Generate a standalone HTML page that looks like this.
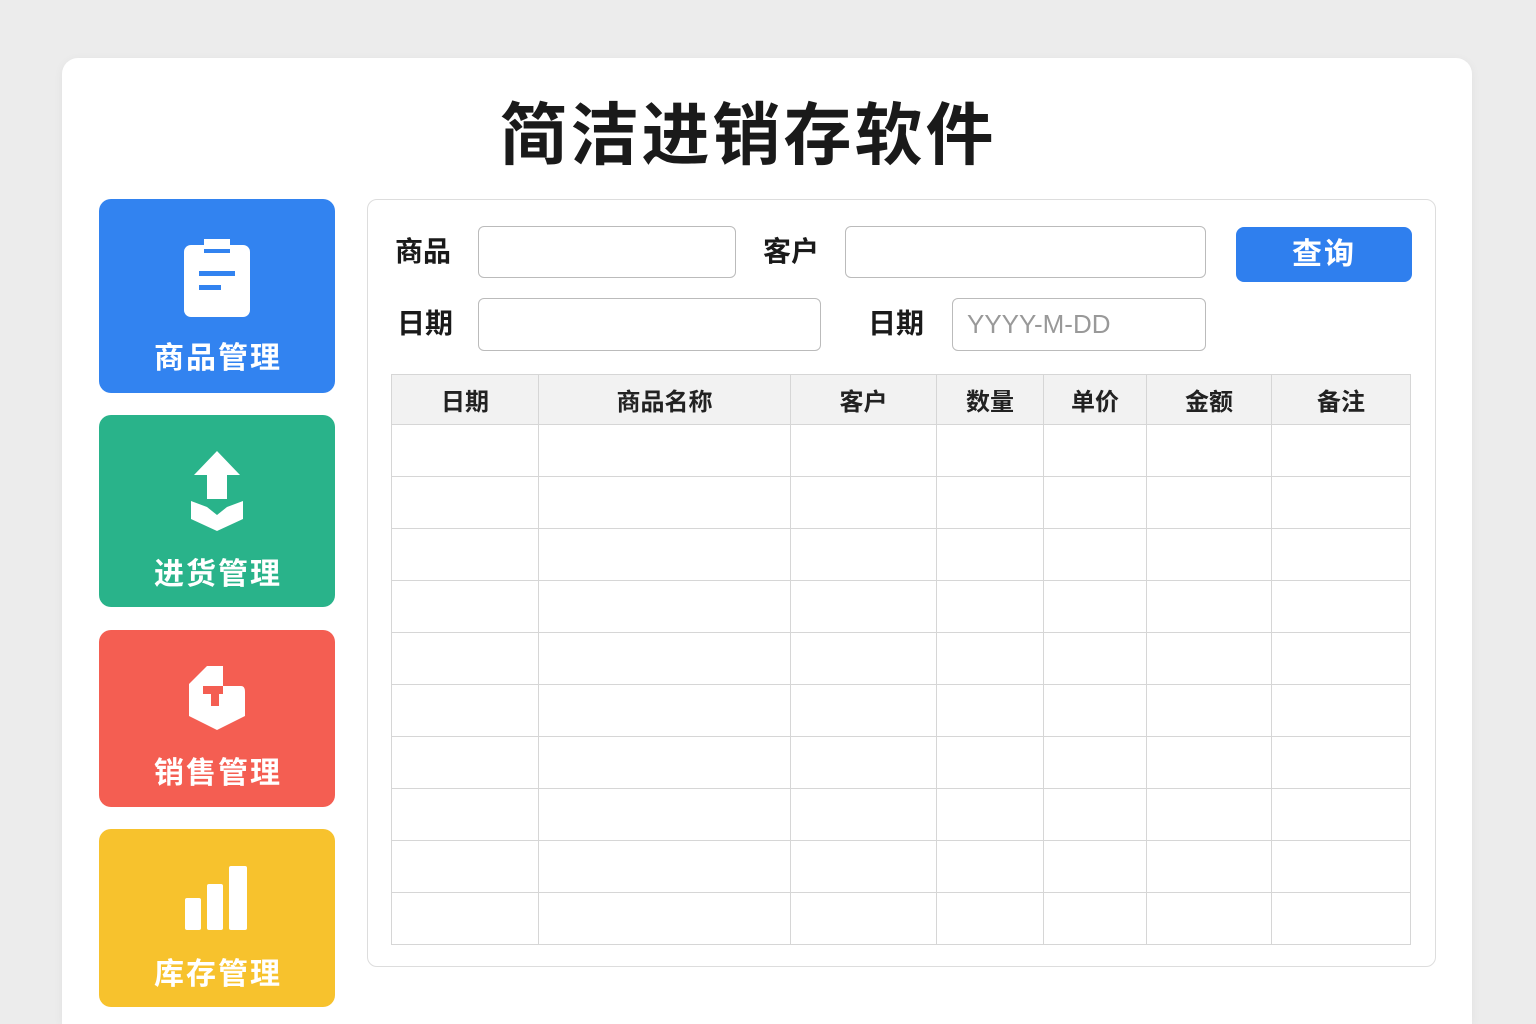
<!DOCTYPE html>
<html><head><meta charset="utf-8"><style>
*{margin:0;padding:0;box-sizing:border-box}
html,body{width:1536px;height:1024px;overflow:hidden}
body{background:#ececec;font-family:"Liberation Sans","Noto Sans CJK SC",sans-serif;position:relative}
.main{position:absolute;left:62px;top:58px;width:1410px;height:966px;background:#fff;border-radius:16px 16px 0 0;box-shadow:0 2px 10px rgba(0,0,0,.05)}
h1{position:absolute;left:0;width:1496px;top:94px;text-align:center;font-size:68px;font-weight:bold;color:#1a1a1a;letter-spacing:3px;line-height:84px}
.card{position:absolute;left:99px;width:236px;border-radius:12px;color:#fff;text-align:center}
.card .t{position:absolute;left:2px;right:0;font-size:30px;font-weight:bold;letter-spacing:2px}
.card svg{position:absolute;left:50%;transform:translateX(-50%)}
.panel{position:absolute;left:367px;top:199px;width:1069px;height:768px;border:1px solid #ddd;border-radius:10px}
.lbl{position:absolute;font-size:28px;font-weight:bold;color:#1a1a1a;line-height:32px}
.in{position:absolute;border:1px solid #bbb;border-radius:6px;background:#fff;font-size:26px;color:#999;padding-left:14px;line-height:50px}
.btn{position:absolute;left:1236px;top:227px;width:176px;height:55px;background:#2f7fee;border-radius:8px;color:#fff;font-size:30px;font-weight:bold;text-align:center;line-height:55px;letter-spacing:2px}
table{position:absolute;left:391px;top:374px;border-collapse:collapse}
td,th{border:1px solid #d6d6d6;height:52px}
th{background:#f2f2f2;font-size:24px;font-weight:bold;color:#222;height:50px}
</style></head><body>
<div class="main"></div>
<h1>简洁进销存软件</h1>

<div class="card" style="top:199px;height:194px;background:#3283f0">
<svg width="70" height="78" viewBox="0 0 70 78" style="top:40px"><rect x="2" y="6" width="66" height="72" rx="7" fill="#fff"/><rect x="22" y="0" width="26" height="14" fill="#fff"/><rect x="22" y="10" width="26" height="4" fill="#3283f0"/><rect x="17" y="32" width="36" height="5" fill="#3283f0"/><rect x="17" y="46" width="22" height="5" fill="#3283f0"/></svg>
<div class="t" style="top:134px">商品管理</div></div>

<div class="card" style="top:415px;height:192px;background:#29b38a">
<svg width="54" height="80" viewBox="0 0 54 80" style="top:36px"><path d="M27 0 L50 24 H37 V48 H17 V24 H4 Z" fill="#fff"/><path d="M1 50 L17 56 L27 64 L37 56 L53 50 V68 L27 80 L1 68 Z" fill="#fff"/></svg>
<div class="t" style="top:134px">进货管理</div></div>

<div class="card" style="top:630px;height:177px;background:#f45e52">
<svg width="56" height="66" viewBox="0 0 56 66" style="top:36px"><path d="M18 0 H34 V20 H52 Q56 20 56 26 V50 L28 64 L0 50 V18 Z" fill="#fff"/><path d="M14 20 H34 V28 H30 V40 H22 V28 H14 Z" fill="#f45e52"/></svg>
<div class="t" style="top:118px">销售管理</div></div>

<div class="card" style="top:829px;height:178px;background:#f7c22d">
<svg width="64" height="64" viewBox="0 0 64 64" style="top:37px"><rect x="0" y="32" width="16" height="32" rx="2" fill="#fff"/><rect x="22" y="18" width="16" height="46" rx="2" fill="#fff"/><rect x="44" y="0" width="18" height="64" rx="2" fill="#fff"/></svg>
<div class="t" style="top:120px">库存管理</div></div>

<div class="panel"></div>
<div class="lbl" style="left:395px;top:236px">商品</div>
<div class="in" style="left:478px;top:226px;width:258px;height:52px"></div>
<div class="lbl" style="left:763px;top:236px">客户</div>
<div class="in" style="left:845px;top:226px;width:361px;height:52px"></div>
<div class="btn">查询</div>
<div class="lbl" style="left:397px;top:308px">日期</div>
<div class="in" style="left:478px;top:298px;width:343px;height:53px"></div>
<div class="lbl" style="left:868px;top:308px">日期</div>
<div class="in" style="left:952px;top:298px;width:254px;height:53px">YYYY-M-DD</div>

<table>
<tr><th style="width:147px">日期</th><th style="width:252px">商品名称</th><th style="width:146px">客户</th><th style="width:107px">数量</th><th style="width:103px">单价</th><th style="width:125px">金额</th><th style="width:139px">备注</th></tr>
<tr><td></td><td></td><td></td><td></td><td></td><td></td><td></td></tr>
<tr><td></td><td></td><td></td><td></td><td></td><td></td><td></td></tr>
<tr><td></td><td></td><td></td><td></td><td></td><td></td><td></td></tr>
<tr><td></td><td></td><td></td><td></td><td></td><td></td><td></td></tr>
<tr><td></td><td></td><td></td><td></td><td></td><td></td><td></td></tr>
<tr><td></td><td></td><td></td><td></td><td></td><td></td><td></td></tr>
<tr><td></td><td></td><td></td><td></td><td></td><td></td><td></td></tr>
<tr><td></td><td></td><td></td><td></td><td></td><td></td><td></td></tr>
<tr><td></td><td></td><td></td><td></td><td></td><td></td><td></td></tr>
<tr><td></td><td></td><td></td><td></td><td></td><td></td><td></td></tr>
</table>
</body></html>
